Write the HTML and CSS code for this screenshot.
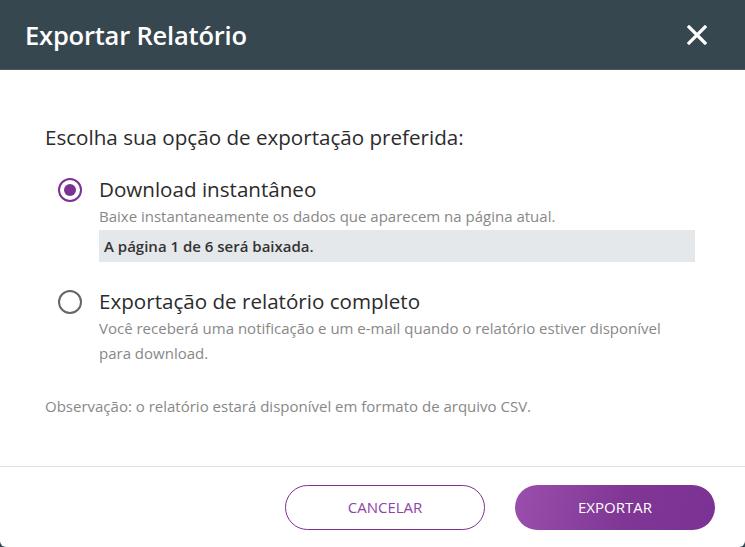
FILE: index.html
```html
<!DOCTYPE html>
<html lang="pt-BR">
<head>
    <meta charset="UTF-8">
    <meta name="viewport" content="width=device-width, initial-scale=1.0">
    <title>Exportar Relatório</title>
    <link rel="stylesheet" href="styles.css">
</head>
<body>
    <div class="modal">
        <div class="modal-header">
            <h2>Exportar Relatório</h2>
            <button class="close-btn" aria-label="Fechar">
                <svg width="20" height="20" viewBox="0 0 20 20">
                    <path d="M2 2 L18 18 M18 2 L2 18" stroke="#fff" stroke-width="3.2" stroke-linecap="square"/>
                </svg>
            </button>
        </div>
        <div class="modal-body">
            <p class="question">Escolha sua opção de exportação preferida:</p>

            <label class="option">
                <input type="radio" name="export" value="instant" checked>
                <span class="radio"></span>
                <span class="option-text">
                    <span class="option-title">Download instantâneo</span>
                    <span class="option-desc">Baixe instantaneamente os dados que aparecem na página atual.</span>
                    <span class="option-info">A página 1 de 6 será baixada.</span>
                </span>
            </label>

            <label class="option">
                <input type="radio" name="export" value="full">
                <span class="radio"></span>
                <span class="option-text">
                    <span class="option-title">Exportação de relatório completo</span>
                    <span class="option-desc">Você receberá uma notificação e um e-mail quando o relatório estiver disponível para download.</span>
                </span>
            </label>

            <p class="note">Observação: o relatório estará disponível em formato de arquivo CSV.</p>
        </div>
        <div class="modal-footer">
            <button class="btn btn-outline">CANCELAR</button>
            <button class="btn btn-primary">EXPORTAR</button>
        </div>
    </div>
</body>
</html>
```

FILE: styles.css
```css
body {
    font-family: "Open Sans", Arial, sans-serif;
    background-color: #37474f;
    margin: 0;
    padding: 0;
    height: 547px;
    overflow: hidden;
}

.modal {
    background: #fff;
    height: 547px;
    border-radius: 0 0 6px 6px;
    display: flex;
    flex-direction: column;
}

.modal-header {
    background-color: #37474f;
    height: 69px;
    border-bottom: 1px solid #4a5b64;
    display: flex;
    align-items: center;
    justify-content: space-between;
    padding: 0 38px 0 25px;
}

.modal-header h2 {
    margin: 0;
    color: #fff;
    font-size: 25.5px;
    font-weight: 600;
    letter-spacing: -0.2px;
}

.close-btn {
    background: none;
    border: none;
    padding: 0;
    cursor: pointer;
    display: flex;
}

.modal-body {
    padding: 50px 50px 0 45px;
    height: 346px;
    border-bottom: 1px solid #e0e0e0;
}

.question {
    margin: 0 0 23px;
    font-size: 20.6px;
    color: #2b2b2b;
    line-height: 34px;
}

.option {
    display: flex;
    align-items: flex-start;
    margin: 0 0 27px 13px;
    cursor: pointer;
}

.option input {
    display: none;
}

.radio {
    width: 20px;
    height: 20px;
    border: 2px solid #666;
    border-radius: 50%;
    margin-top: 1px;
    flex-shrink: 0;
    display: flex;
    align-items: center;
    justify-content: center;
}

.option input:checked + .radio {
    border-color: #7b3294;
}

.option input:checked + .radio::after {
    content: "";
    width: 12px;
    height: 12px;
    border-radius: 50%;
    background: #7b3294;
}

.option-text {
    display: flex;
    flex-direction: column;
    margin-left: 17px;
    flex: 1;
}

.option-title {
    font-size: 20.6px;
    color: #2b2b2b;
    line-height: 24px;
}

.option-desc {
    font-size: 15px;
    color: #888;
    line-height: 25px;
    margin-top: 3px;
}

.option-info {
    background-color: #e5e8eb;
    font-size: 15px;
    font-weight: 600;
    color: #333;
    line-height: 32px;
    padding: 0 5px;
    margin-top: 1px;
}

.note {
    margin: 30px 0 0;
    font-size: 15px;
    color: #888;
}

.modal-footer {
    display: flex;
    justify-content: flex-end;
    gap: 30px;
    padding: 18px 30px 0 0;
}

.btn {
    width: 200px;
    height: 45px;
    border-radius: 23px;
    font-family: "Open Sans", Arial, sans-serif;
    font-size: 15px;
    line-height: 43px;
    padding: 0;
    cursor: pointer;
}

.btn-outline {
    background: #fff;
    border: 1px solid #7b3294;
    color: #8e44a8;
}

.btn-primary {
    background: linear-gradient(100deg, #9b4fad 0%, #7f3694 55%, #7b3294 100%);
    border: none;
    color: #fff;
}
```
